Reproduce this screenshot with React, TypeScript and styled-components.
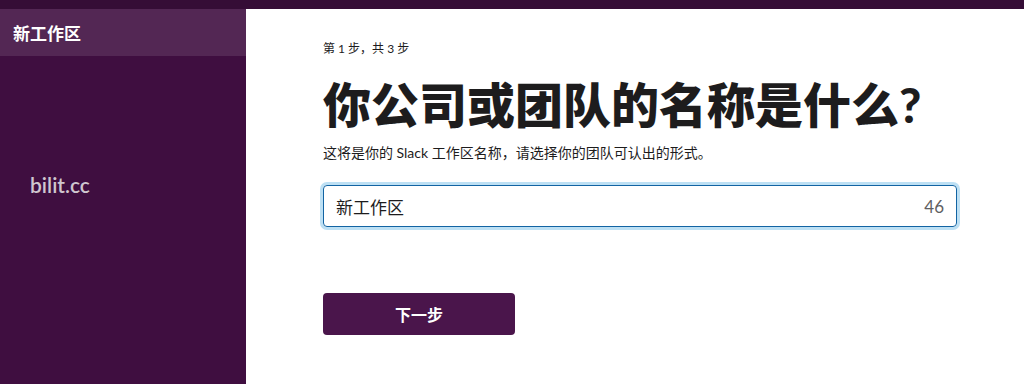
import React, { FC } from 'react';
import styled, { createGlobalStyle } from 'styled-components';

const GlobalStyle = createGlobalStyle`
  html, body {
    margin: 0;
    padding: 0;
    height: 100%;
  }
  body {
    font-family: Lato, "Noto Sans CJK SC", sans-serif;
    color: #1d1c1d;
    background: #fff;
  }
  #root {
    height: 100%;
  }
`;

const Page = styled.div`
  display: flex;
  flex-direction: column;
  height: 100vh;
  overflow: hidden;
`;

const TopBar = styled.div`
  height: 9px;
  flex: none;
  background: #350d36;
`;

const Body = styled.div`
  display: flex;
  flex: 1;
  min-height: 0;
`;

const Sidebar = styled.aside`
  width: 246px;
  flex: none;
  background: #3f0e40;
  display: flex;
  flex-direction: column;
`;

const WorkspaceItem = styled.div<{ $active?: boolean }>`
  height: 47px;
  display: flex;
  align-items: center;
  padding: 0 13px;
  font-size: 17px;
  font-weight: 700;
  color: #fff;
  background: ${(p) => (p.$active ? '#532754' : 'transparent')};
`;

const Watermark = styled.div`
  margin: 116px 0 0 30px;
  font-family: Lato, sans-serif;
  font-size: 21px;
  font-weight: 600;
  line-height: 26px;
  color: #cfc6cf;
`;

const Main = styled.main`
  flex: 1;
  padding: 32px 0 0 77px;
`;

const Content = styled.div`
  width: 634px;
  display: flex;
  flex-direction: column;
`;

const Step = styled.div`
  font-size: 12px;
  line-height: 16px;
  color: #1d1c1d;
`;

const Title = styled.h1`
  margin: 19px 0 0;
  font-size: 48px;
  line-height: 58px;
  font-weight: 900;
  color: #1d1c1d;
  white-space: nowrap;
`;

const Subtitle = styled.p`
  margin: 9px 0 0;
  font-size: 14px;
  line-height: 20px;
  color: #1d1c1d;
`;

const Field = styled.div`
  margin-top: 22px;
  height: 42px;
  box-sizing: border-box;
  display: flex;
  align-items: center;
  justify-content: space-between;
  padding: 0 12px;
  border: 1px solid #1264a3;
  border-radius: 4px;
  box-shadow: 0 0 0 3px #bde0f4;
`;

const FieldValue = styled.span`
  font-size: 17px;
  color: #1d1c1d;
`;

const Counter = styled.span`
  font-family: Lato, sans-serif;
  font-size: 17px;
  color: #616061;
`;

const Primary = styled.button`
  margin-top: 66px;
  width: 192px;
  height: 42px;
  border: none;
  border-radius: 4px;
  background: #4a154b;
  color: #fff;
  font-family: Lato, "Noto Sans CJK SC", sans-serif;
  font-size: 16px;
  font-weight: 700;
  cursor: pointer;
`;

const App: FC = () => {
  return (
    <>
      <GlobalStyle />
      <Page>
        <TopBar />
        <Body>
          <Sidebar>
            <WorkspaceItem $active>新工作区</WorkspaceItem>
            <Watermark>bilit.cc</Watermark>
          </Sidebar>
          <Main>
            <Content>
              <Step>第 1 步，共 3 步</Step>
              <Title>你公司或团队的名称是什么?</Title>
              <Subtitle>这将是你的 Slack 工作区名称，请选择你的团队可认出的形式。</Subtitle>
              <Field>
                <FieldValue>新工作区</FieldValue>
                <Counter>46</Counter>
              </Field>
              <div>
                <Primary>下一步</Primary>
              </div>
            </Content>
          </Main>
        </Body>
      </Page>
    </>
  );
};

export default App;
